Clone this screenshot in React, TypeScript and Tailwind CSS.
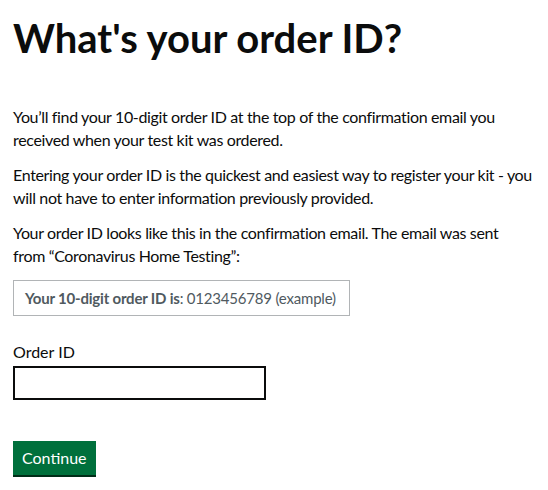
export default function App() {
  const p = "text-[16px] leading-[23px] tracking-[-0.35px]";
  return (
    <div className="min-h-[490px] w-[548px] bg-white text-[#0b0c0c]" style={{ fontFamily: 'Lato, Arial, sans-serif' }}>
      <div className="pl-[13px] pt-[14px]">
        <h1 className="text-[40px] font-bold leading-[48px] mb-[43px]">What's your order ID?</h1>
        <p className={`${p} mb-[12px]`}>You’ll find your 10-digit order ID at the top of the confirmation email you<br />received when your test kit was ordered.</p>
        <p className={`${p} mb-[12px]`}>Entering your order ID is the quickest and easiest way to register your kit - you<br />will not have to enter information previously provided.</p>
        <p className={`${p} mb-[13px]`}>Your order ID looks like this in the confirmation email. The email was sent<br />from “Coronavirus Home Testing”:</p>
        <div className="w-[337px] h-[36px] border border-[#b1b4b6] flex items-center pl-[11px] text-[15px] tracking-[-0.2px] text-[#505a5f] whitespace-nowrap">
          <span><span className="font-bold">Your 10-digit order ID is</span>: 0123456789 (example)</span>
        </div>
        <label className="block mt-[24px] text-[16px] leading-[23px] mb-[3px]">Order ID</label>
        <input className="block w-[253px] h-[34px] border-2 border-[#0b0c0c] outline-none" />
        <button className="mt-[41px] h-[34px] px-[9px] bg-[#00703c] text-white text-[16px] shadow-[0_2px_0_#002d18]">Continue</button>
      </div>
    </div>
  );
}
